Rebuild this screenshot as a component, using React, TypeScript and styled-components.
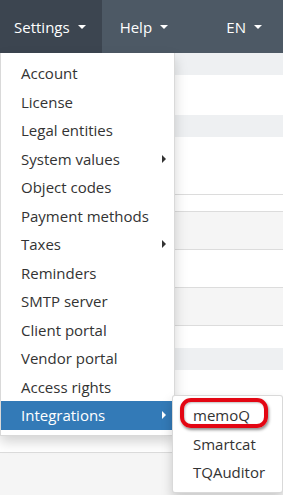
import React from "react";
import styled, { createGlobalStyle } from "styled-components";

const GlobalStyle = createGlobalStyle`
  html, body { margin: 0; padding: 0; background: #fff; }
  body { font-family: "Open Sans", "DejaVu Sans", sans-serif; }
  * { box-sizing: border-box; }
`;

const Page = styled.div`
  position: relative;
  width: 283px;
  height: 495px;
  overflow: hidden;
  background: #fff;
`;

const Navbar = styled.nav`
  display: flex;
  align-items: stretch;
  height: 53px;
  background: #4d5965;
`;

const NavItem = styled.div<{ $active?: boolean; $right?: boolean; $first?: boolean }>`
  display: flex;
  align-items: center;
  gap: 8px;
  padding: ${(p) => (p.$first ? "0 16px 0 14px" : p.$right ? "0 21px 0 15px" : "0 15px 0 18px")};
  margin-left: ${(p) => (p.$right ? "auto" : "0")};
  background: ${(p) => (p.$active ? "#3c4550" : "transparent")};
  color: #fff;
  font-size: 15px;
  line-height: 20px;
`;

const Caret = styled.span`
  display: inline-block;
  width: 0;
  height: 0;
  border-top: 4px solid #fff;
  border-left: 4px solid transparent;
  border-right: 4px solid transparent;
  margin-top: 1px;
`;

const Content = styled.div`
  display: flex;
  flex-direction: column;
`;

const Band = styled.div<{ $h: number; $tone?: "blue" | "gray" | "white"; $line?: boolean }>`
  height: ${(p) => p.$h}px;
  background: ${(p) => (p.$tone === "blue" ? "#eef0f2" : p.$tone === "gray" ? "#f5f5f5" : "#fff")};
  border-bottom: ${(p) => (p.$line ? "1px solid #dcdcdc" : "none")};
  flex: none;
`;

const Menu = styled.ul`
  position: absolute;
  top: 53px;
  left: 0;
  width: 175px;
  margin: 0;
  padding: 5px 0;
  list-style: none;
  background: #fff;
  border: 1px solid rgba(0, 0, 0, 0.15);
  border-top: none;
  box-shadow: 0 6px 12px rgba(0, 0, 0, 0.175);
  padding-top: 6px;
`;

const Item = styled.li<{ $active?: boolean }>`
  position: relative;
  display: flex;
  align-items: center;
  justify-content: space-between;
  padding: 3px 8px 3px 20px;
  font-size: 15px;
  line-height: 22.5px;
  white-space: nowrap;
  color: ${(p) => (p.$active ? "#fff" : "#333")};
  background: ${(p) => (p.$active ? "#337ab7" : "transparent")};
`;

const Arrow = styled.span<{ $light?: boolean }>`
  display: inline-block;
  width: 0;
  height: 0;
  border-left: 4px solid ${(p) => (p.$light ? "#fff" : "#333")};
  border-top: 4px solid transparent;
  border-bottom: 4px solid transparent;
`;

const SubMenu = styled.ul`
  position: absolute;
  top: -6px;
  left: calc(100% - 2px);
  width: 111px;
  margin: 0;
  padding: 5px 0;
  list-style: none;
  background: #fff;
  border: 1px solid rgba(0, 0, 0, 0.15);
  border-radius: 3px;
  box-shadow: 0 6px 12px rgba(0, 0, 0, 0.175);
`;

const SubItem = styled.li`
  position: relative;
  padding: 3px 20px;
  font-size: 15px;
  line-height: 22.5px;
  color: #333;
  white-space: nowrap;
`;

const Ring = styled.span`
  position: absolute;
  left: 7px;
  top: -3px;
  width: 88px;
  height: 30px;
  border: 4px solid #e30613;
  border-radius: 11px;
  box-shadow: 1px 2px 3px rgba(0, 0, 0, 0.45), inset 1px 1px 2px rgba(0, 0, 0, 0.25);
  pointer-events: none;
`;

const items: { label: string; sub?: boolean }[] = [
  { label: "Account" },
  { label: "License" },
  { label: "Legal entities" },
  { label: "System values", sub: true },
  { label: "Object codes" },
  { label: "Payment methods" },
  { label: "Taxes", sub: true },
  { label: "Reminders" },
  { label: "SMTP server" },
  { label: "Client portal" },
  { label: "Vendor portal" },
  { label: "Access rights" },
];

export default function App() {
  return (
    <Page>
      <GlobalStyle />
      <Navbar>
        <NavItem $active $first>
          Settings <Caret />
        </NavItem>
        <NavItem>
          Help <Caret />
        </NavItem>
        <NavItem $right>
          EN <Caret />
        </NavItem>
      </Navbar>
      <Content>
        <Band $h={22} $tone="blue" />
        <Band $h={40} />
        <Band $h={22} $tone="blue" />
        <Band $h={58} $line />
        <Band $h={17} $line />
        <Band $h={38} $tone="gray" $line />
        <Band $h={38} $line />
        <Band $h={38} $tone="gray" $line />
        <Band $h={22} />
        <Band $h={22} $tone="blue" />
        <Band $h={83} $line />
        <Band $h={60} $tone="gray" />
      </Content>
      <Menu>
        {items.map((it) => (
          <Item key={it.label}>
            {it.label}
            {it.sub && <Arrow />}
          </Item>
        ))}
        <Item $active>
          Integrations
          <Arrow $light />
          <SubMenu>
            <SubItem>
              memoQ
              <Ring />
            </SubItem>
            <SubItem>Smartcat</SubItem>
            <SubItem>TQAuditor</SubItem>
          </SubMenu>
        </Item>
      </Menu>
    </Page>
  );
}
